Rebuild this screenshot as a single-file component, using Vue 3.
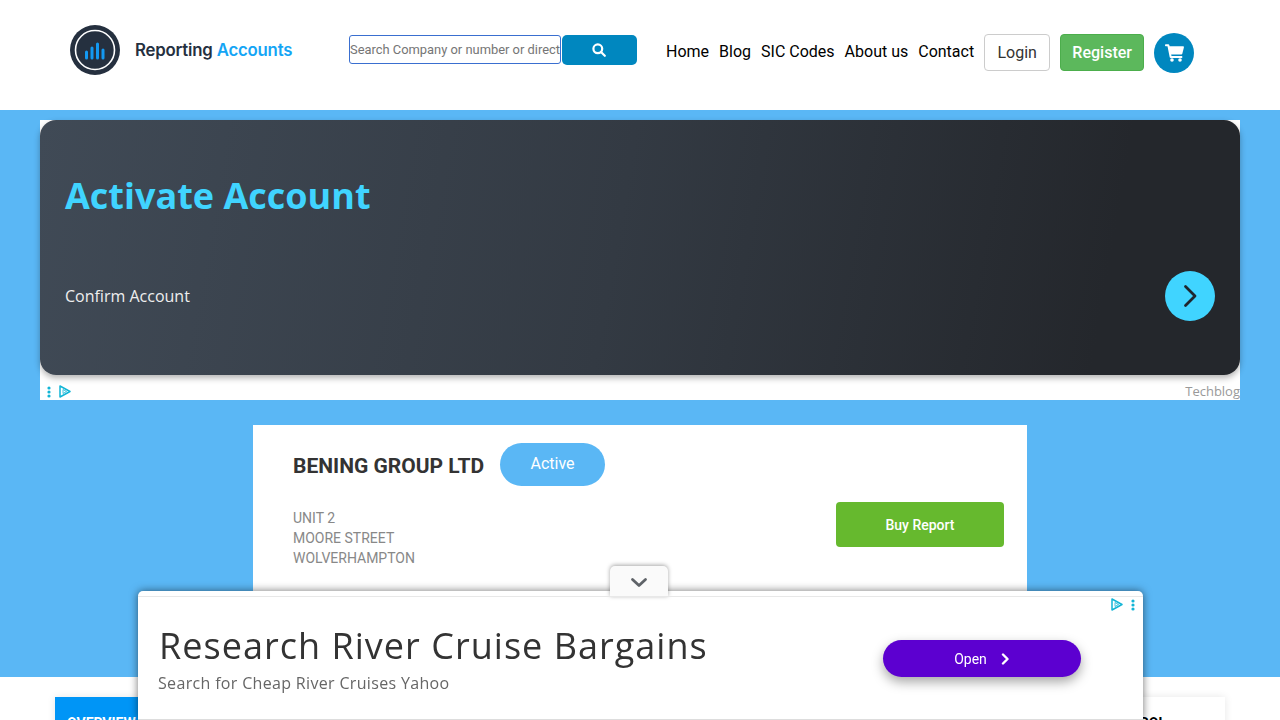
<script setup>
const nav = ['Home', 'Blog', 'SIC Codes', 'About us', 'Contact']
const address = ['UNIT 2', 'MOORE STREET', 'WOLVERHAMPTON']
</script>

<template>
  <div class="page">
    <header class="header">
      <div class="logo">
        <svg class="logo-mark" width="50" height="50" viewBox="0 0 50 50">
          <circle cx="25" cy="25" r="25" fill="#25303f" />
          <circle cx="25" cy="25" r="19.5" fill="none" stroke="#fff" stroke-width="1.6" />
          <g stroke="#1399f2" stroke-width="3" stroke-linecap="round">
            <line x1="16.5" y1="33" x2="16.5" y2="27" />
            <line x1="22" y1="33" x2="22" y2="23" />
            <line x1="27.5" y1="33" x2="27.5" y2="19" />
            <line x1="33" y1="33" x2="33" y2="25" />
          </g>
        </svg>
        <span class="logo-text">Reporting <b>Accounts</b></span>
      </div>

      <form class="search" @submit.prevent>
        <input class="search-input" placeholder="Search Company or number or director" />
        <button class="search-btn" aria-label="Search">
          <svg width="14" height="14" viewBox="0 0 14 14" fill="none" stroke="#fff" stroke-width="2.2">
            <circle cx="5.8" cy="5.8" r="4.4" />
            <line x1="9" y1="9" x2="12.8" y2="12.8" stroke-linecap="round" />
          </svg>
        </button>
      </form>

      <nav class="nav">
        <a v-for="item in nav" :key="item">{{ item }}</a>
      </nav>
      <a class="btn login">Login</a>
      <a class="btn register">Register</a>
      <a class="cart" aria-label="Cart">
        <svg width="19" height="18" viewBox="0 0 19 18" fill="#fff">
          <path d="M0 1.2C0 .6.4.2 1 .2h2.3c.5 0 .9.3 1 .8l.3 1.2H18c.6 0 1 .6.9 1.2l-1.6 6.4c-.1.5-.5.8-1 .8H6.2l.3 1.5h9.9c.6 0 1 .4 1 1s-.4 1-1 1H5.7c-.5 0-.9-.3-1-.8L2.5 2.2H1c-.6 0-1-.4-1-1z" />
          <circle cx="7" cy="16" r="1.8" />
          <circle cx="15" cy="16" r="1.8" />
        </svg>
      </a>
    </header>

    <section class="hero">
      <div class="top-ad">
        <div class="ad-panel">
          <h2 class="ad-title">Activate Account</h2>
          <div class="ad-row">
            <span class="ad-text">Confirm Account</span>
            <span class="ad-arrow">
              <svg width="16" height="24" viewBox="0 0 16 24" fill="none" stroke="#1f262d" stroke-width="2.8" stroke-linecap="round" stroke-linejoin="round">
                <path d="M3.5 2.5l9.5 9.5-9.5 9.5" />
              </svg>
            </span>
          </div>
        </div>
        <div class="ad-foot">
          <span class="ad-marks">
            <svg width="4" height="12" viewBox="0 0 4 12" fill="#12b5d6">
              <circle cx="2" cy="2" r="1.6" /><circle cx="2" cy="6" r="1.6" /><circle cx="2" cy="10" r="1.6" />
            </svg>
            <svg width="12" height="13" viewBox="0 0 12 13" fill="none" stroke="#12b5d6" stroke-width="1.5" stroke-linejoin="round">
              <path d="M1 1l10 5.5L1 12z" /><path d="M4 4.5v4l3.5-2z" stroke-width=".8" />
            </svg>
          </span>
          <span class="ad-source">Techblog</span>
        </div>
      </div>

      <div class="company">
        <div class="company-head">
          <h1 class="company-name">BENING GROUP LTD</h1>
          <span class="status">Active</span>
        </div>
        <div class="company-body">
          <div class="address">
            <div v-for="line in address" :key="line">{{ line }}</div>
          </div>
          <a class="buy">Buy Report</a>
        </div>
      </div>
    </section>

    <section class="tabs">
      <a class="tab active">OVERVIEW</a>
      <a class="tab last">CONTROL</a>
    </section>

    <aside class="anchor">
      <div class="anchor-tab">
        <svg width="18" height="11" viewBox="0 0 18 11" fill="none" stroke="#5f6368" stroke-width="2.8" stroke-linecap="round" stroke-linejoin="round">
          <path d="M2.5 2.5L9 8.5l6.500-6" />
        </svg>
      </div>
      <div class="anchor-strip"></div>
      <span class="anchor-marks">
        <svg width="12" height="13" viewBox="0 0 12 13" fill="none" stroke="#12b5d6" stroke-width="1.5" stroke-linejoin="round">
          <path d="M1 1l10 5.500L1 12z" /><path d="M4 4.500v4l3.500-2z" stroke-width=".8" />
        </svg>
        <svg width="4" height="12" viewBox="0 0 4 12" fill="#12b5d6">
          <circle cx="2" cy="2" r="1.6" /><circle cx="2" cy="6" r="1.6" /><circle cx="2" cy="10" r="1.6" />
        </svg>
      </span>
      <div class="anchor-body">
        <div class="anchor-copy">
          <div class="anchor-title">Research River Cruise Bargains</div>
          <div class="anchor-sub">Search for Cheap River Cruises Yahoo</div>
        </div>
        <a class="open">
          Open
          <svg width="9" height="12" viewBox="0 0 9 12" fill="none" stroke="#fff" stroke-width="2.4" stroke-linecap="round" stroke-linejoin="round">
            <path d="M2 1.500L6.500 6 2 10.500" />
          </svg>
        </a>
      </div>
    </aside>
  </div>
</template>

<style>
html, body { margin: 0; overflow: hidden; }
</style>

<style scoped>
.page {
  height: 720px;
  overflow: hidden;
  background: #fff;
  font-family: Roboto, "Liberation Sans", sans-serif;
}

.header {
  height: 110px;
  box-sizing: border-box;
  padding: 0 0 10px 70px;
  display: flex;
  align-items: center;
}
.logo { display: flex; align-items: center; width: 279px; }
.logo-mark { flex: none; }
.logo-text {
  margin-left: 15px;
  margin-top: -1px;
  font-family: Inter, sans-serif;
  font-size: 16.8px;
  font-weight: 600;
  letter-spacing: -0.2px;
  color: #25303f;
  white-space: nowrap;
}
.logo-text b { font-weight: 600; color: #14a5f5; }

.search { display: flex; align-items: flex-start; margin: 0; height: 30px; }
.search-input {
  width: 212px;
  height: 29px;
  box-sizing: border-box;
  padding: 0;
  border: 1px solid #3a6fd0;
  border-radius: 3px;
  font-family: Roboto, sans-serif;
  font-size: 12.9px;
  outline: none;
}
.search-input::placeholder { color: #757575; opacity: 1; }
.search-btn {
  width: 75px;
  height: 30px;
  margin-left: 1px;
  padding: 0 2px 0 0;
  border: 0;
  border-radius: 5px;
  background: #0087bf;
  display: flex;
  align-items: center;
  justify-content: center;
}

.nav { display: flex; gap: 10px; margin: 2px 0 0 29px; font-size: 16px; color: #000; }
.btn {
  box-sizing: border-box;
  height: 37px;
  margin-top: 5px;
  border-radius: 4px;
  display: flex;
  align-items: center;
  justify-content: center;
  font-size: 16px;
}
.login { width: 66px; margin-left: 10px; border: 1px solid #ccc; color: #333; }
.register { width: 84px; margin-left: 10px; background: #5cb85c; color: #fff; border: 1px solid #4cae4c; font-weight: 500; }
.cart {
  width: 40px;
  height: 40px;
  margin: 6px 0 0 10px;
  border-radius: 50%;
  background: #0087bf;
  display: flex;
  align-items: center;
  justify-content: center;
}

.hero {
  height: 567px;
  box-sizing: border-box;
  padding: 10px 40px 0;
  background: #5ab7f5;
  display: flex;
  flex-direction: column;
  align-items: center;
}
.top-ad { width: 1200px; height: 280px; background: #fff; flex: none; }
.ad-panel {
  height: 255px;
  box-sizing: border-box;
  padding: 54px 25px 0;
  border-radius: 16px;
  background: linear-gradient(100deg, #404a56 0%, #333a43 48%, #24272c 88%);
  box-shadow: 0 3px 6px rgba(0, 0, 0, 0.3);
  font-family: "Open Sans", sans-serif;
}
.ad-title { margin: 0; font-size: 36px; line-height: 44px; font-weight: 700; color: #40d4ff; }
.ad-row { display: flex; justify-content: space-between; align-items: center; margin-top: 53px; }
.ad-text { font-size: 16px; color: #eee; }
.ad-arrow {
  width: 50px;
  height: 50px;
  border-radius: 50%;
  background: #40d4ff;
  display: flex;
  align-items: center;
  justify-content: center;
}
.ad-foot { height: 25px; display: flex; justify-content: space-between; align-items: flex-end; }
.ad-marks { display: flex; align-items: center; gap: 8px; margin-left: 7px; margin-bottom: 2px; }
.ad-source { font-family: "Open Sans", sans-serif; font-size: 13px; line-height: 18px; color: #999; }

.company {
  width: 774px;
  flex: 1;
  margin-top: 25px;
  box-sizing: border-box;
  padding: 18px 23px 0 40px;
  background: #fff;
}
.company-head { display: flex; align-items: center; gap: 16px; height: 43px; }
.company-name { margin: 2px 0 0; font-size: 21px; font-weight: 700; color: #333; white-space: nowrap; }
.status {
  width: 105px;
  height: 43px;
  border-radius: 22px;
  background: #5ab7f5;
  color: #fff;
  font-size: 16px;
  display: flex;
  align-items: center;
  justify-content: center;
  padding-bottom: 3px;
  box-sizing: border-box;
}
.company-body { display: flex; justify-content: space-between; margin-top: 16px; }
.address { margin-top: 6px; font-size: 14px; line-height: 20px; color: #888; }
.buy {
  width: 168px;
  height: 45px;
  border-radius: 4px;
  background: #66b92e;
  color: #fff;
  font-size: 14px;
  font-weight: 500;
  display: flex;
  align-items: center;
  justify-content: center;
}

.tabs {
  margin: 20px 55px 0;
  height: 60px;
  display: flex;
  justify-content: space-between;
  background: #fff;
  box-shadow: 0 0 8px rgba(0, 0, 0, 0.1);
  font-size: 14px;
  font-weight: 700;
}
.tab { padding: 18px 12px 0; color: #000; }
.tab.last { padding-right: 59px; }
.tab.active { background: #0095f6; color: #fff; }

.anchor {
  position: fixed;
  left: 138px;
  bottom: 0;
  width: 1005px;
  height: 129px;
  box-sizing: border-box;
  background: #fff;
  border-bottom: 1px solid #ddd;
  border-radius: 5px 5px 0 0;
  box-shadow: 0 0 8px rgba(0, 0, 0, 0.55);
}
.anchor-tab {
  position: absolute;
  left: 472px;
  top: -25px;
  width: 58px;
  height: 31px;
  box-sizing: border-box;
  padding-top: 7px;
  background: #fafafa;
  border-radius: 5px 5px 0 0;
  box-shadow: 0 -1px 4px rgba(0, 0, 0, 0.35);
  text-align: center;
}
.anchor-strip { height: 5px; border-bottom: 1px solid #e8e8e8; position: relative; }
.anchor-marks {
  position: absolute;
  right: 8px;
  top: 7px;
  display: flex;
  align-items: center;
  gap: 8px;
}
.anchor-body {
  display: flex;
  justify-content: space-between;
  align-items: flex-start;
  padding: 26px 62px 0 21px;
  font-family: "Open Sans", sans-serif;
}
.anchor-title { font-size: 36px; line-height: 46px; font-weight: 500; letter-spacing: 1.03px; color: #333; white-space: nowrap; }
.anchor-sub { margin-top: 3px; margin-left: -1px; font-size: 16px; line-height: 22px; letter-spacing: 0.33px; color: #666; }
.open {
  width: 198px;
  height: 37px;
  margin-top: 17px;
  border-radius: 19px;
  background: #5c00d0;
  box-shadow: 0 5px 12px rgba(0, 0, 0, 0.35);
  color: #fff;
  font-family: Roboto, sans-serif;
  font-size: 14px;
  font-weight: 400;
  display: flex;
  align-items: center;
  justify-content: center;
  gap: 14px;
}
</style>
